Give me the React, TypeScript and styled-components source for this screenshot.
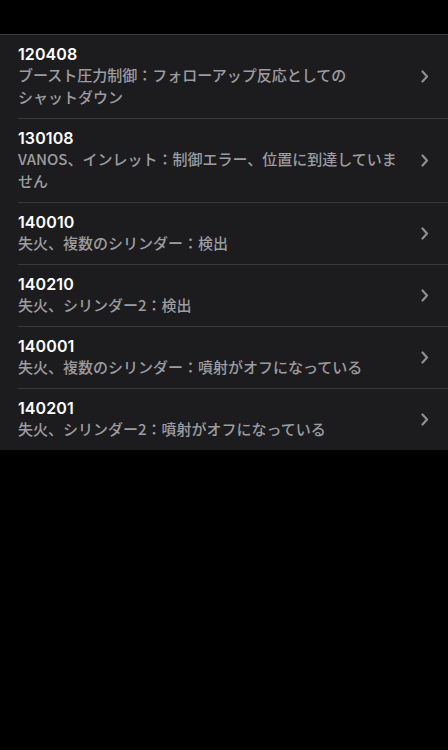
import React from 'react';
import styled, { createGlobalStyle } from 'styled-components';

const GlobalStyle = createGlobalStyle`
  html, body {
    margin: 0;
    padding: 0;
    background: #000;
  }
  body {
    font-family: Inter, "Noto Sans CJK JP", sans-serif;
    -webkit-font-smoothing: antialiased;
  }
`;

const Page = styled.div`
  min-height: 750px;
  background: #000;
  padding-top: 34px;
`;

const List = styled.ul`
  list-style: none;
  margin: 0;
  padding: 0;
  background: #1c1c1e;
  border-top: 1px solid #38383a;
`;

const Row = styled.li`
  display: flex;
  align-items: center;
  padding-left: 18px;
`;

const Body = styled.div<{ last: boolean }>`
  flex: 1;
  display: flex;
  align-items: center;
  padding: 9px 19px 10px 0;
  border-bottom: ${({ last }) => (last ? 'none' : '1px solid #38383a')};
`;

const Texts = styled.div`
  flex: 1;
  min-width: 0;
`;

const Code = styled.div`
  font-family: Inter, "Noto Sans CJK JP", sans-serif;
  font-weight: 600;
  font-size: 16px;
  line-height: 20px;
  color: #fff;
  letter-spacing: 0.1px;
`;

const Desc = styled.div`
  font-family: "Noto Sans CJK JP", sans-serif;
  font-weight: 500;
  font-size: 15px;
  line-height: 22px;
  color: #9c9ca1;
  white-space: pre-line;
`;

const Chevron = styled.svg`
  flex: none;
  width: 8px;
  height: 13px;
  margin-left: 14px;
`;

const faults = [
  { code: '120408', text: 'ブースト圧力制御：フォローアップ反応としての\nシャットダウン' },
  { code: '130108', text: 'VANOS、インレット：制御エラー、位置に到達していません' },
  { code: '140010', text: '失火、複数のシリンダー：検出' },
  { code: '140210', text: '失火、シリンダー2：検出' },
  { code: '140001', text: '失火、複数のシリンダー：噴射がオフになっている' },
  { code: '140201', text: '失火、シリンダー2：噴射がオフになっている' },
];

const App: React.FC = () => (
  <>
    <GlobalStyle />
    <Page>
      <List>
        {faults.map((f, i) => (
          <Row key={f.code}>
            <Body last={i === faults.length - 1}>
              <Texts>
                <Code>{f.code}</Code>
                <Desc>{f.text}</Desc>
              </Texts>
              <Chevron viewBox="0 0 8 13">
                <path d="M1.5 1.5 L6 6.5 L1.5 11.5" fill="none" stroke="#8e8e93" strokeWidth="2.2" strokeLinecap="round" strokeLinejoin="round" />
              </Chevron>
            </Body>
          </Row>
        ))}
      </List>
    </Page>
  </>
);

export default App;
